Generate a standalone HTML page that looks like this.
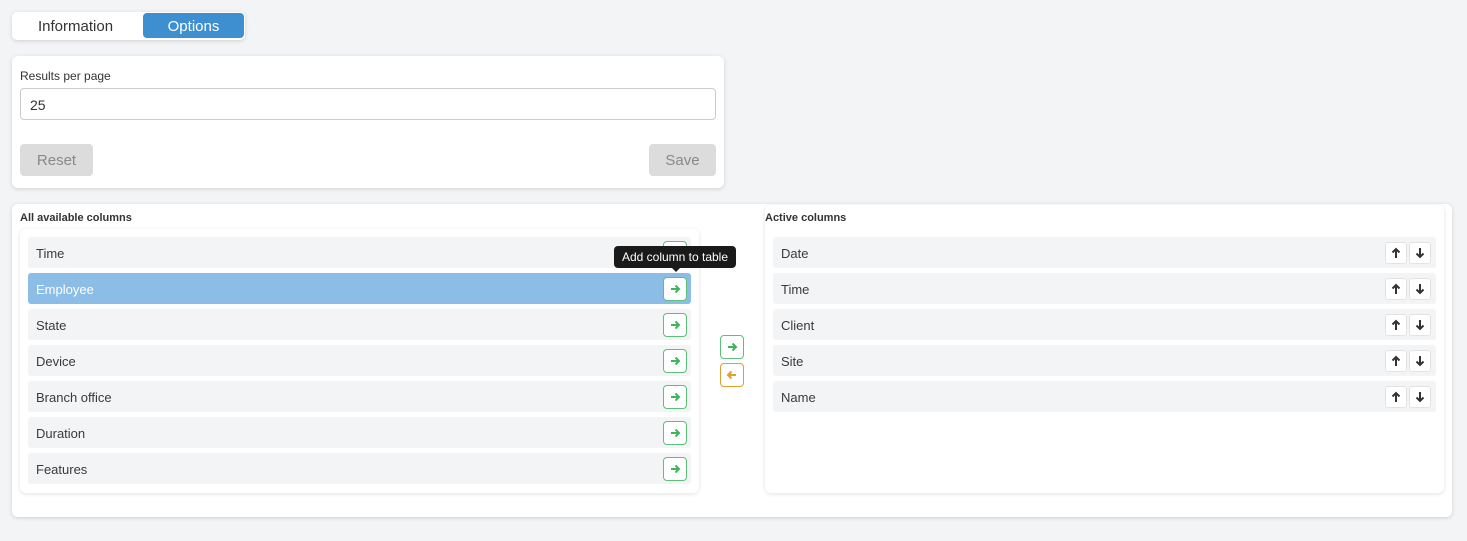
<!DOCTYPE html>
<html><head><style>
*{box-sizing:border-box;margin:0;padding:0}
body{width:1467px;height:541px;background:#f3f4f6;font-family:"Liberation Sans",Arial,sans-serif;position:relative;overflow:hidden;color:#333}
.abs{position:absolute}
.card{position:absolute;background:#fff;border-radius:6px;box-shadow:0 1px 4px rgba(0,0,0,.15)}
.row{position:absolute;left:8px;width:663px;height:31px;background:#f3f4f5;border-radius:3px;font-size:13px;line-height:33px;padding-left:8px;color:#3a3a3a}
.btn{position:absolute;width:24px;height:24px;border:1px solid #5cc07a;border-radius:4px;background:#fff;display:flex;align-items:center;justify-content:center;z-index:5}
.ud{position:absolute;width:22px;height:22px;border:1px solid #e2e2e2;border-radius:3px;background:#fff;display:flex;align-items:center;justify-content:center;z-index:5}
.lbl{position:absolute;font-size:11px;font-weight:bold;color:#333}
</style></head><body>
<div class="card" style="left:12px;top:12px;width:233px;height:28px;border-radius:5px"></div>
<div class="abs" style="left:38px;top:18px;font-size:15px;color:#333">Information</div>
<div class="abs" style="left:143px;top:13px;width:101px;height:25px;background:#3d8fcf;border-radius:4px;color:#fff;font-size:15px;text-align:center;line-height:27px">Options</div>

<div class="card" style="left:12px;top:56px;width:712px;height:132px">
 <div class="abs" style="left:8px;top:13px;font-size:12px">Results per page</div>
 <div class="abs" style="left:8px;top:32px;width:696px;height:32px;border:1px solid #ccc;border-radius:4px;font-size:14px;line-height:32px;padding-left:9px">25</div>
 <div class="abs" style="left:8px;top:88px;width:73px;height:32px;background:#dcdcdc;border-radius:4px;color:#888;font-size:15px;text-align:center;line-height:34px">Reset</div>
 <div class="abs" style="left:637px;top:88px;width:67px;height:32px;background:#dcdcdc;border-radius:4px;color:#888;font-size:15px;text-align:center;line-height:34px">Save</div>
</div>

<div class="card" style="left:12px;top:204px;width:1440px;height:313px"></div>
<div class="lbl" style="left:20px;top:212px">All available columns</div>
<div class="card" style="left:20px;top:229px;width:679px;height:264px;box-shadow:0 1px 4px rgba(0,0,0,.12)">
 <div class="row" style="top:8px">Time</div>
 <div class="row" style="top:44px;background:#8bbde6;color:#fff">Employee</div>
 <div class="row" style="top:80px">State</div>
 <div class="row" style="top:116px">Device</div>
 <div class="row" style="top:152px">Branch office</div>
 <div class="row" style="top:188px">Duration</div>
 <div class="row" style="top:224px">Features</div>
</div>
<div class="card" style="left:765px;top:205px;width:679px;height:288px;box-shadow:0 1px 4px rgba(0,0,0,.12)">
 <div class="lbl" style="left:0;top:7px">Active columns</div>
 <div class="row" style="top:32px;width:663px">Date</div>
 <div class="row" style="top:68px">Time</div>
 <div class="row" style="top:104px">Client</div>
 <div class="row" style="top:140px">Site</div>
 <div class="row" style="top:176px">Name</div>
</div>
<div id="lb"></div>
<script>
var g='<svg width="12" height="12" viewBox="0 0 12 12"><path d="M2 6H10M6.5 2.5L10 6L6.5 9.5" stroke="#3cb55e" stroke-width="2" fill="none"/></svg>';
var o='<svg width="12" height="12" viewBox="0 0 12 12"><path d="M10 6H2M5.5 2.5L2 6L5.5 9.5" stroke="#e0a030" stroke-width="2" fill="none"/></svg>';
var up='<svg width="10" height="12" viewBox="0 0 10 12"><path d="M5 11V2M1.5 5.5L5 2L8.5 5.5" stroke="#333" stroke-width="2" fill="none"/></svg>';
var dn='<svg width="10" height="12" viewBox="0 0 10 12"><path d="M5 1V10M1.5 6.5L5 10L8.5 6.5" stroke="#333" stroke-width="2" fill="none"/></svg>';
var h='';
for(var i=0;i<7;i++){h+='<div class="btn" style="left:663px;top:'+(241+36*i)+'px">'+g+'</div>';}
h+='<div class="btn" style="left:720px;top:335px">'+g+'</div>';
h+='<div class="btn" style="left:720px;top:363px;border-color:#e0a030">'+o+'</div>';
for(var i=0;i<5;i++){var t=242+36*i;h+='<div class="ud" style="left:1385px;top:'+t+'px">'+up+'</div><div class="ud" style="left:1409px;top:'+t+'px">'+dn+'</div>';}
h+='<div class="abs" style="left:614px;top:246px;width:122px;height:22px;background:#1a1a1a;border-radius:4px;color:#fff;font-size:12px;line-height:22px;text-align:center;z-index:6">Add column to table</div>';
h+='<div class="abs" style="left:671px;top:267px;width:0;height:0;border-left:5px solid transparent;border-right:5px solid transparent;border-top:5px solid #1a1a1a;z-index:6"></div>';
document.getElementById('lb').innerHTML=h;
</script>
</body></html>
